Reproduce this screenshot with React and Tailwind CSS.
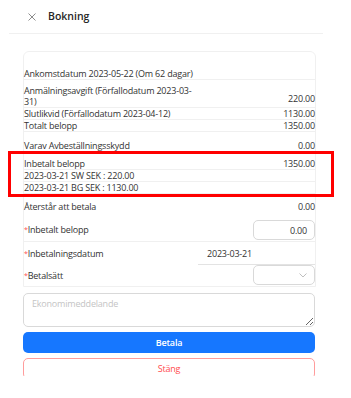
export default function App() {
  return (
    <div className="relative w-[351px] h-[398px] overflow-hidden bg-white text-[9px] tracking-[-0.2px] text-[#333333] font-['Open_Sans',sans-serif]">
      {/* Header */}
      <div className="ml-[9px] w-[314px] h-[34px] border-b border-[#f0f0f0] flex items-center pl-[19px] gap-[12px]">
        <svg width="8" height="8" viewBox="0 0 8 8" className="text-[#8c8c8c]">
          <path d="M0.5 0.5 L7.5 7.5 M7.5 0.5 L0.5 7.5" stroke="currentColor" strokeWidth="1" fill="none" />
        </svg>
        <span className="text-[10.5px] tracking-normal font-semibold text-[#262626]">Bokning</span>
      </div>

      {/* Content */}
      <div className="ml-[23px] w-[293px] mt-[17px] h-[325px] overflow-hidden">
        <div className="border border-[#f0f0f0] rounded-t-[6px] leading-[11px]">
          <div className="h-[28px] flex items-end border-b border-[#f0f0f0]">
            <span>Ankomstdatum 2023-05-22 (Om 62 dagar)</span>
          </div>
          <div className="h-[28px] flex items-end justify-between border-b border-[#f0f0f0]">
            <span className="w-[172px]">
              Anmälningsavgift (Förfallodatum 2023-03-<wbr />31)
            </span>
            <span className="mb-[3px]">220.00</span>
          </div>
          <div className="h-[12px] flex justify-between border-b border-[#f0f0f0]">
            <span>Slutlikvid (Förfallodatum 2023-04-12)</span>
            <span>1130.00</span>
          </div>
          <div className="h-[12px] flex justify-between border-b border-[#f0f0f0]">
            <span>Totalt belopp</span>
            <span>1350.00</span>
          </div>
          <div className="h-[19px] flex items-end justify-between">
            <span>Varav Avbeställningsskydd</span>
            <span>0.00</span>
          </div>
          <div className="h-[19px] flex items-end justify-between border-b border-[#f0f0f0]">
            <span>Inbetalt belopp</span>
            <span>1350.00</span>
          </div>
          <div className="h-[12px] flex border-b border-[#f0f0f0]">
            <span>2023-03-21 SW SEK : 220.00</span>
          </div>
          <div className="h-[12px] flex border-b border-[#f0f0f0]">
            <span>2023-03-21 BG SEK : 1130.00</span>
          </div>
          <div className="h-[18px] flex items-end justify-between">
            <span>Återstår att betala</span>
            <span>0.00</span>
          </div>
          <div className="h-[30px] flex items-end justify-between border-b border-[#f0f0f0] pb-[1px]">
            <span className="mb-[5px]">
              <span className="text-[#ff4d4f] text-[7px] align-top">*</span>Inbetalt belopp
            </span>
            <div className="w-[62px] h-[20px] border border-[#d9d9d9] rounded-[5px] flex items-center justify-end pr-[7px]">
              0.00
            </div>
          </div>
          <div className="h-[23px] flex items-center justify-between">
            <span>
              <span className="text-[#ff4d4f] text-[7px] align-top">*</span>Inbetalningsdatum
            </span>
            <div className="w-[117px] h-full border-b border-[#e3e3e3] flex items-center pl-[9px]">
              2023-03-21
            </div>
          </div>
          <div className="h-[21px] flex items-start justify-between">
            <span className="mt-[5px]">
              <span className="text-[#ff4d4f] text-[7px] align-top">*</span>Betalsätt
            </span>
            <div className="w-[62px] h-[20px] border border-[#d9d9d9] rounded-[5px] flex items-center justify-end pr-[7px]">
              <svg width="8" height="5" viewBox="0 0 8 5" className="text-[#bfbfbf]">
                <path d="M0.5 0.5 L4 4 L7.5 0.5" stroke="currentColor" strokeWidth="1" fill="none" />
              </svg>
            </div>
          </div>
        </div>

        <textarea
          readOnly
          placeholder="Ekonomimeddelande"
          className="mt-[6px] block w-[292px] h-[34px] border border-[#d9d9d9] rounded-[5px] px-[8px] py-[4px] text-[9px] leading-[12px] placeholder:text-[#c4c4c4] outline-none"
        />

        <button className="mt-[5px] w-[292px] h-[21px] rounded-[5px] bg-[#1677ff] text-white font-semibold text-[9px] flex items-center justify-center">
          Betala
        </button>
        <button className="mt-[5px] w-[292px] h-[21px] rounded-[5px] border border-[#ff9c9c] text-[#ff4d4f] text-[9px] flex items-center justify-center">
          Stäng
        </button>
      </div>

      {/* Annotation */}
      <div className="absolute left-[8px] top-[151px] w-[326px] h-[46px] border-[3px] border-[#ff0000]" />
    </div>
  )
}
